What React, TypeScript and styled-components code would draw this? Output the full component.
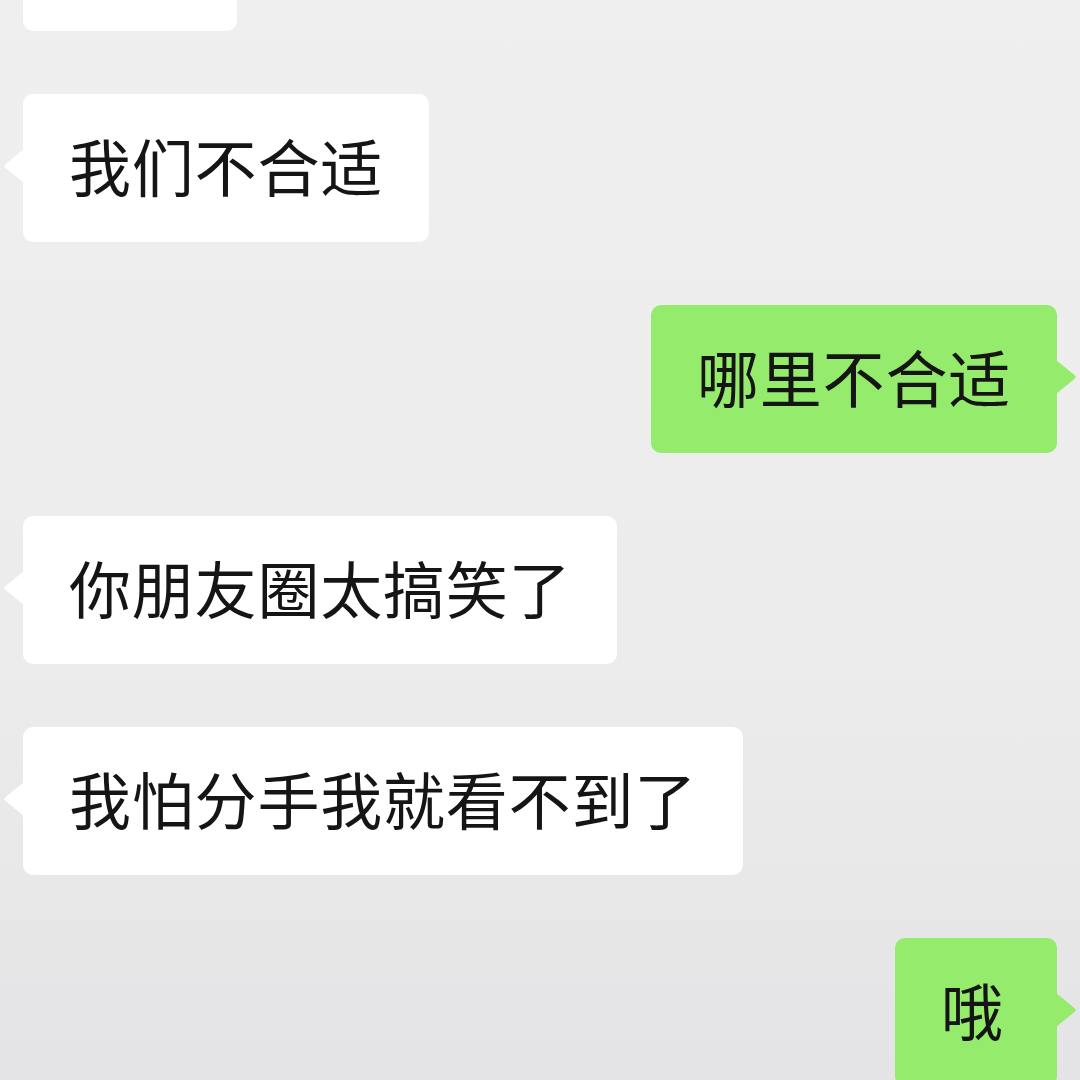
import React, { FC } from 'react'
import styled, { createGlobalStyle, css } from 'styled-components'

const GlobalStyle = createGlobalStyle`
	html, body {
		margin: 0;
		padding: 0;
		width: 1080px;
		height: 1080px;
		overflow: hidden;
	}
	body {
		background: linear-gradient(180deg, #efefef 0%, #ececec 60%, #e4e4e6 100%);
		font-family: 'Noto Sans CJK SC', 'Noto Sans', sans-serif;
	}
`

const Chat = styled.div`
	display: flex;
	flex-direction: column;
	gap: 63px;
	padding: 0 23px;
	/* the view is scrolled: the first bubble sits mostly above the top edge */
	margin-top: -117px;
`

const Row = styled.div<{ $mine: boolean }>`
	display: flex;
	justify-content: ${(p) => (p.$mine ? 'flex-end' : 'flex-start')};
`

const Bubble = styled.div<{ $mine: boolean }>`
	position: relative;
	box-sizing: border-box;
	height: 148px;
	min-width: 162px;
	padding: 40px 46px 46px 46px;
	border-radius: 10px;
	font-size: 62px;
	line-height: 62px;
	letter-spacing: 0.8px;
	color: #151515;
	white-space: nowrap;
	background: ${(p) => (p.$mine ? '#95eb6b' : '#ffffff')};

	&::before {
		content: '';
		position: absolute;
		top: 55px;
		width: 20px;
		height: 34px;
		background: inherit;
		${(p) =>
			p.$mine
				? css`
						right: -19px;
						clip-path: polygon(0 0, 92% 44%, 100% 50%, 92% 56%, 0 100%);
				  `
				: css`
						left: -19px;
						clip-path: polygon(100% 0, 8% 44%, 0 50%, 8% 56%, 100% 100%);
				  `}
	}
`

/* earlier message scrolled out of view: only its bottom edge shows */
const ScrolledBubble = styled(Bubble)`
	width: 214px;
`

type Message = { text: string; mine: boolean }

const messages: Message[] = [
	{ text: '我们不合适', mine: false },
	{ text: '哪里不合适', mine: true },
	{ text: '你朋友圈太搞笑了', mine: false },
	{ text: '我怕分手我就看不到了', mine: false },
	{ text: '哦', mine: true },
]

const App: FC = () => {
	return (
		<>
			<GlobalStyle />
			<Chat>
				<Row $mine={false}>
					<ScrolledBubble $mine={false} />
				</Row>
				{messages.map((m, i) => (
					<Row key={i} $mine={m.mine}>
						<Bubble $mine={m.mine}>{m.text}</Bubble>
					</Row>
				))}
			</Chat>
		</>
	)
}

export default App
